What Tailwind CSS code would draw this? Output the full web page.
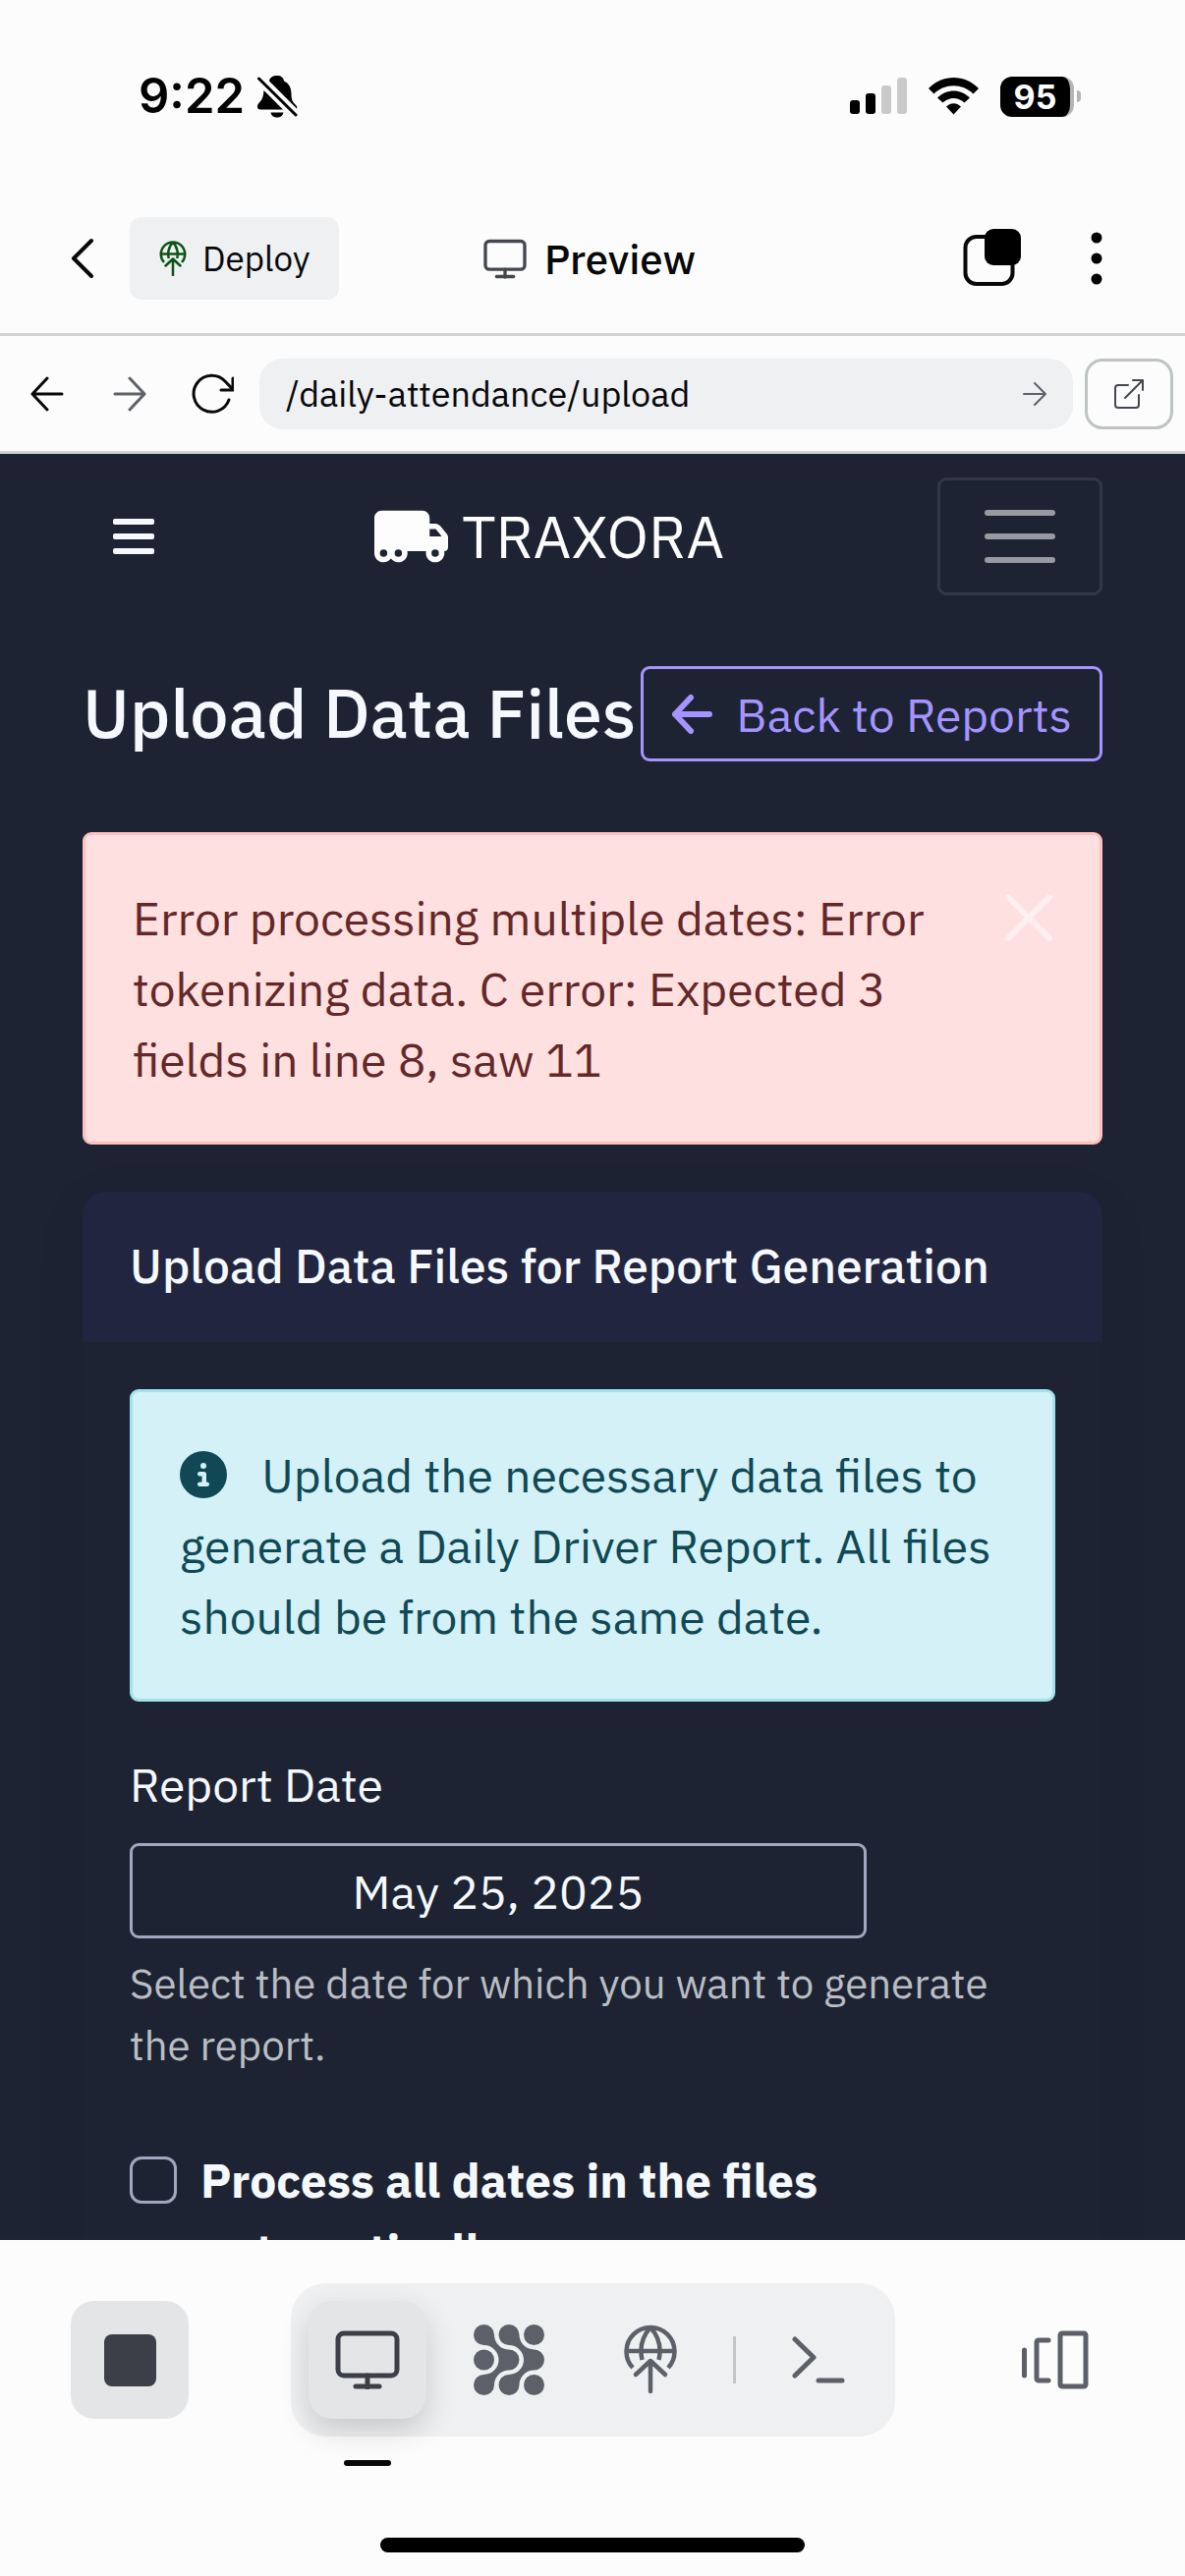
<!DOCTYPE html>
<html lang="en">
<head>
<meta charset="utf-8">
<meta name="viewport" content="width=device-width, initial-scale=1">
<title>Preview</title>
<script src="https://cdn.jsdelivr.net/npm/@tailwindcss/browser@4"></script>
</head>
<body class="flex h-screen flex-col bg-[#fcfcfc] font-['IBM_Plex_Sans',Roboto,sans-serif] text-[#07080a]">

<!-- Status bar -->
<div class="h-[187px] shrink-0 pt-[66px]">
  <div class="flex h-16 items-center justify-between pr-[106px] pl-[141px] font-[Inter,sans-serif] text-black">
    <div class="flex items-center gap-3">
      <span class="text-[49px] font-semibold">9:22</span>
      <svg class="h-[44px] w-[42px]" viewBox="0 0 42 44" fill="none">
        <path fill="#000" d="M21 1c4 0 6.500 2 7 5.500 5 2 7.500 7 7.500 13 0 6 1 8 5 12 .8.800 1 2 .5 3L13 6.500c.4-3.500 3.500-5.500 8-5.500zM7.500 16 27 35.500H4c-3 0-4-3.500-2-6 4-4 5-7 5.500-13.500zM14.500 38.500h13c-.5 3-3 5-6.500 5s-6-2-6.500-5z"/>
        <path stroke="#fcfcfc" stroke-width="7" d="M3 4 40 41"/>
        <path stroke="#000" stroke-width="3" stroke-linecap="round" d="M2.500 4 40 41"/>
      </svg>
    </div>
    <div class="flex items-center">
      <svg class="h-[38px] w-[58px]" viewBox="0 0 58 38">
        <rect x="0" y="23" width="10" height="14" rx="3"/><rect x="16" y="16" width="10" height="21" rx="3"/>
        <rect x="32" y="8" width="10" height="29" rx="3" fill="#c9c9c9"/><rect x="48" y="0" width="10" height="37" rx="3" fill="#c9c9c9"/>
      </svg>
      <svg class="ml-[22px] h-[38px] w-[51px]" viewBox="0 0 51 38">
        <path d="M0 11C14-3.600 37-3.600 51 11l-5.500 5.500c-11-11-29-11-40 0zM9 20.500c9.500-9.500 23.500-9.500 33 0l-5.500 5c-6.500-6-15.500-6-22 0zM18 29.500c4.500-4.500 10.500-4.500 15 0L25.500 37.500z"/>
      </svg>
      <div class="ml-[22px] flex items-center gap-[3px]">
        <span class="flex h-[41px] w-[75px] items-center justify-center rounded-[12px] border-r-4 border-[#b4b4b4] bg-black text-[34px] font-bold text-white">95</span>
        <span class="h-3 w-1 rounded-r-full bg-[#b4b4b4]"></span>
      </div>
    </div>
  </div>
</div>

<!-- App toolbar -->
<header class="grid shrink-0 grid-cols-[1fr_auto_1fr] items-center border-b-[3px] border-[#d2d3d3] py-[34px] pr-[66px] pl-[60px]">
  <div class="flex items-center gap-6">
    <button type="button" aria-label="Back" class="flex h-[84px] w-12 items-center justify-center">
      <svg class="h-[42px] w-6" viewBox="0 0 24 42" fill="none" stroke="currentColor" stroke-width="4" stroke-linecap="round" stroke-linejoin="round"><path d="M21 3 3 21l18 18"/></svg>
    </button>
    <button type="button" class="flex h-[84px] items-center gap-4 rounded-[12px] bg-[#eff0f2] px-[30px] text-[35px]">
      <svg class="h-[36px] w-[28px] text-[#0b5416]" viewBox="0 0 54 72" fill="none" stroke="currentColor" stroke-width="5" stroke-linecap="round" stroke-linejoin="round"><path stroke-linecap="butt" d="M9 44a24.500 24.500 0 1 1 36 0M2.500 27h49M27 3C17 14 16 25 18.500 36M27 3c10 11 11 22 8.500 33"/><path d="M27 70V37M12 51l15-14 15 14"/></svg>
      Deploy
    </button>
  </div>
  <h1 class="flex items-center gap-[18px] text-[42px] font-medium">
    <svg class="h-[41px] w-[44px] text-[#44474f]" viewBox="0 0 66 60" fill="none" stroke="currentColor" stroke-width="5" stroke-linecap="round"><rect x="3" y="3" width="60" height="43" rx="6"/><path d="M33 46v12M20 57h26"/></svg>
    Preview
  </h1>
  <div class="flex items-center justify-end gap-[52px]">
    <button type="button" aria-label="Duplicate">
      <svg class="h-[60px] w-[60px]" viewBox="0 0 60 60"><rect x="2.500" y="8" width="48" height="48" rx="11" fill="none" stroke="currentColor" stroke-width="4"/><rect x="22" y="0" width="37" height="37" rx="9"/></svg>
    </button>
    <button type="button" aria-label="More" class="flex w-12 justify-center">
      <svg class="h-[54px] w-3" viewBox="0 0 12 54"><circle cx="6" cy="6" r="5.500"/><circle cx="6" cy="27" r="5.500"/><circle cx="6" cy="48" r="5.500"/></svg>
    </button>
  </div>
</header>

<!-- Address bar -->
<nav class="flex shrink-0 items-center gap-3 border-b-[3px] border-[#d0d4d2] px-3 pt-[23px] pb-[22px]">
  <button type="button" aria-label="Go back" class="flex h-[72px] w-[72px] items-center justify-center">
    <svg class="h-9 w-9" viewBox="0 0 36 36" fill="none" stroke="currentColor" stroke-width="3" stroke-linecap="round" stroke-linejoin="round"><path d="M33 18H4M18 2 3 18l15 16"/></svg>
  </button>
  <button type="button" aria-label="Go forward" class="flex h-[72px] w-[72px] items-center justify-center text-[#5f6168]">
    <svg class="h-9 w-9" viewBox="0 0 36 36" fill="none" stroke="currentColor" stroke-width="3" stroke-linecap="round" stroke-linejoin="round"><path d="M3 18h29M18 2l15 16-15 16"/></svg>
  </button>
  <button type="button" aria-label="Reload" class="flex h-[72px] w-[72px] items-center justify-center">
    <svg class="h-11 w-11" viewBox="0 0 44 44" fill="none" stroke="currentColor" stroke-width="3" stroke-linecap="round" stroke-linejoin="round"><path d="M39 28A18.500 18.500 0 1 1 35 9l8 8.500M43 6v12H31"/></svg>
  </button>
  <div class="flex h-[72px] min-w-0 flex-1 items-center rounded-[24px] bg-[#eff0f2] pr-6 pl-[27px]">
    <input type="text" aria-label="Path" value="/daily-attendance/upload" class="min-w-0 flex-1 bg-transparent text-[36px] outline-none">
    <button type="button" aria-label="Go" class="text-[#5f6168]">
      <svg class="h-[30px] w-[30px]" viewBox="0 0 30 30" fill="none" stroke="currentColor" stroke-width="2" stroke-linecap="round" stroke-linejoin="round"><path d="M4 15h22M15 4l11 11-11 11"/></svg>
    </button>
  </div>
  <button type="button" aria-label="Open in new tab" class="flex h-[72px] w-[90px] items-center justify-center rounded-[18px] border-[3px] border-[#bfc3c3] text-[#44474f]">
    <svg class="h-8 w-8" viewBox="0 0 32 32" fill="none" stroke="currentColor" stroke-width="2" stroke-linecap="round" stroke-linejoin="round"><path d="M15 7H5a3 3 0 0 0-3 3v17a3 3 0 0 0 3 3h18a3 3 0 0 0 3-3V17M12 20 30 2M20 2h10v10"/></svg>
  </button>
</nav>

<!-- Previewed page -->
<main class="min-h-0 flex-1 overflow-hidden bg-[#1d2332] text-[#f5f8fc]">
  <nav class="flex h-[168px] items-center justify-between px-[84px]">
    <button type="button" aria-label="Toggle sidebar" class="flex h-[96px] w-[104px] items-center justify-center">
      <svg class="h-9 w-[42px]" viewBox="0 0 42 36" fill="currentColor"><rect width="42" height="6" rx="2"/><rect y="15" width="42" height="6" rx="2"/><rect y="30" width="42" height="6" rx="2"/></svg>
    </button>
    <a href="#" class="mr-6 flex items-center gap-[14px] text-[60px] leading-none text-[#fdfdfd]">
      <svg class="h-[60px] w-[75px]" viewBox="0 0 640 512" fill="currentColor"><path d="M64 32C28.700 32 0 60.700 0 96V400c0 44.200 35.800 80 80 80c26.200 0 49.400-12.600 64-32c14.600 19.400 37.800 32 64 32c44.200 0 80-35.800 80-80c0-5.500-.6-10.800-1.600-16H449.600c-1 5.200-1.600 10.500-1.600 16c0 44.200 35.800 80 80 80s80-35.800 80-80c0-5.500-.6-10.800-1.600-16H608c17.700 0 32-14.300 32-32V261.700c0-9.200-3.200-18.200-9-25.300l-58.800-71.800c-10.600-13-26.500-20.500-43.300-20.500H480V96c0-35.300-28.700-64-64-64H64zM585 256H480V192h48.800c2.400 0 4.700 1.100 6.200 2.900L585 256zM528 368a32 32 0 1 1 0 64 32 32 0 1 1 0-64zM176 400a32 32 0 1 1 64 0 32 32 0 1 1-64 0zM80 368a32 32 0 1 1 0 64 32 32 0 1 1 0-64z"/></svg>
      TRAXORA
    </a>
    <button type="button" aria-label="Toggle navigation" class="flex h-[120px] w-[168px] items-center justify-center rounded-[9px] border-[3px] border-[#313747]">
      <svg class="h-[54px] w-[72px] text-[#989aa1]" viewBox="0 0 72 54" fill="currentColor"><rect width="72" height="6" rx="3"/><rect y="24" width="72" height="6" rx="3"/><rect y="48" width="72" height="6" rx="3"/></svg>
    </button>
  </nav>

  <div class="px-[84px] pt-12">
    <div class="flex items-start justify-between">
      <h2 class="text-[70px] leading-[94px] font-medium whitespace-nowrap">Upload Data Files</h2>
      <a href="#" class="flex h-[97px] items-center gap-6 rounded-[9px] border-[3px] border-[#a594ff] px-7 text-[48px] leading-[72px] whitespace-nowrap text-[#a594ff]">
        <svg class="h-[42px] w-[42px]" viewBox="0 0 42 42" fill="none" stroke="currentColor" stroke-width="6" stroke-linecap="round" stroke-linejoin="round"><path d="M39 21H4M20 4 4 21l16 17"/></svg>
        Back to Reports
      </a>
    </div>

    <div role="alert" class="mt-[72px] flex items-start justify-between rounded-[9px] border-[3px] border-[#ffc0be] bg-[#ffe0e0] p-12 text-[#642828]">
      <p class="max-w-[840px] text-[48px] leading-[72px]">Error processing multiple dates: Error tokenizing data. C error: Expected 3 fields in line 8, saw 11</p>
      <button type="button" aria-label="Close" class="mt-3 text-white/50">
        <svg class="h-12 w-12" viewBox="0 0 48 48" fill="none" stroke="currentColor" stroke-width="6" stroke-linecap="round"><path d="M3 3l42 42M45 3 3 45"/></svg>
      </button>
    </div>

    <section class="mt-12 rounded-[24px] shadow-[0_12px_60px_rgba(0,0,0,0.05)]">
      <div class="h-[153px] rounded-t-[24px] bg-[#212540] px-12 pt-[46px]">
        <h3 class="text-[48px] leading-[58px] font-medium">Upload Data Files for Report Generation</h3>
      </div>
      <form class="p-12">
        <div class="rounded-[9px] border-[3px] border-[#a3e2ec] bg-[#d3f1f7] p-12 text-[48px] leading-[72px] text-[#104955]">
          <svg class="mr-6 inline h-12 w-12 -translate-y-1.5" viewBox="0 0 512 512" fill="currentColor"><path d="M256 512A256 256 0 1 0 256 0a256 256 0 1 0 0 512zM216 336h24V272H216c-13.300 0-24-10.700-24-24s10.700-24 24-24h48c13.300 0 24 10.700 24 24v88h8c13.300 0 24 10.700 24 24s-10.700 24-24 24H216c-13.300 0-24-10.700-24-24s10.700-24 24-24zm40-208a32 32 0 1 1 0 64 32 32 0 1 1 0-64z"/></svg>
          Upload the necessary data files to generate a Daily Driver Report. All files should be from the same date.
        </div>
        <label for="report-date" class="mt-12 block text-[48px] leading-[72px]">Report Date</label>
        <input id="report-date" type="text" value="May 25, 2025" class="mt-6 block h-[97px] w-[750px] max-w-full rounded-[9px] border-[3px] border-[#a0a8bf] bg-transparent text-center text-[48px] outline-none">
        <p class="mt-[14px] text-[42px] leading-[63px] text-[#b9bdc4]">Select the date for which you want to generate the report.</p>
        <div class="mt-[70px] flex items-start gap-6">
          <input id="all-dates" type="checkbox" class="mt-3 h-12 w-12 shrink-0 appearance-none rounded-[12px] border-[3px] border-[#a0a8bf]">
          <label for="all-dates" class="max-w-[700px] text-[48px] leading-[72px] font-bold">Process all dates in the files automatically</label>
        </div>
      </form>
    </section>
  </div>
</main>

<!-- Bottom tool switcher -->
<footer class="relative z-10 flex shrink-0 flex-col bg-[#fcfcfc] pt-11 pb-6">
  <div class="flex items-center justify-between px-[72px]">
    <button type="button" aria-label="Stop" class="flex h-[120px] w-[120px] items-center justify-center rounded-[24px] bg-[#e4e5e7]">
      <span class="h-[53px] w-[53px] rounded-[8px] bg-[#3c3f47]"></span>
    </button>
    <div class="flex items-center gap-6 rounded-[36px] bg-[#eff0f2] p-[18px] text-[#5d6068]">
      <button type="button" aria-label="Preview" class="relative flex h-[120px] w-[120px] items-center justify-center rounded-[24px] bg-[#e4e5e7] text-[#3c3f47] shadow-[0_12px_30px_rgba(0,0,0,0.16)]">
        <svg class="h-[60px] w-[66px]" viewBox="0 0 66 60" fill="none" stroke="currentColor" stroke-width="5" stroke-linecap="round"><rect x="3" y="3" width="60" height="43" rx="6"/><path d="M33 46v12M21 57h24"/></svg>
        <span class="absolute top-[162px] h-1.5 w-12 rounded-full bg-[#07080a]"></span>
      </button>
      <button type="button" aria-label="Agent" class="flex h-[120px] w-[120px] items-center justify-center">
        <svg class="h-[72px] w-[72px]" viewBox="0 0 72 72" fill="currentColor">
          <path d="M0 10.500A10.500 10.500 0 0 1 21 10.500A15 15 0 0 0 36 25.500A10.500 10.500 0 0 1 36 46.500A15 15 0 0 0 21 61.500A10.500 10.500 0 1 1 10.500 51A15 15 0 0 0 10.500 21A10.500 10.500 0 0 1 0 10.500Z"/>
          <path transform="translate(25.500 0)" d="M0 10.500A10.500 10.500 0 0 1 21 10.500A15 15 0 0 0 36 25.500A10.500 10.500 0 0 1 36 46.500A15 15 0 0 0 21 61.500A10.500 10.500 0 1 1 10.500 51A15 15 0 0 0 10.500 21A10.500 10.500 0 0 1 0 10.500Z"/>
          <circle cx="10.500" cy="36" r="10.500"/><circle cx="61.500" cy="10.500" r="10.500"/><circle cx="61.500" cy="61.500" r="10.500"/>
        </svg>
      </button>
      <button type="button" aria-label="Deployments" class="flex h-[120px] w-[120px] items-center justify-center">
        <svg class="h-[72px] w-[54px]" viewBox="0 0 54 72" fill="none" stroke="currentColor" stroke-width="4.500" stroke-linecap="round" stroke-linejoin="round"><path stroke-linecap="butt" d="M9 44a24.500 24.500 0 1 1 36 0M2.500 27h49M27 3C17 14 16 25 18.500 36M27 3c10 11 11 22 8.500 33"/><path d="M27 68V37M12 51l15-14 15 14"/></svg>
      </button>
      <span class="h-12 w-[3px] bg-[#c2c4c6]"></span>
      <button type="button" aria-label="Console" class="flex h-[120px] w-[120px] items-center justify-center">
        <svg class="h-12 w-[54px]" viewBox="0 0 54 48" fill="none" stroke="currentColor" stroke-width="5" stroke-linecap="round" stroke-linejoin="round"><path d="M3 3l19 18.500L3 40M27 45h24"/></svg>
      </button>
    </div>
    <button type="button" aria-label="All tabs" class="flex h-[120px] w-[120px] items-center justify-center text-[#5d6068]">
      <svg class="h-[60px] w-[70px]" viewBox="0 0 70 60" fill="none" stroke="currentColor" stroke-width="5" stroke-linecap="round" stroke-linejoin="round"><path d="M3.500 20v26M28 10H18a2 2 0 0 0-2 2v37a2 2 0 0 0 2 2h10"/><rect x="40" y="3" width="26" height="54" rx="2"/></svg>
    </button>
  </div>
  <div class="mx-auto mt-[103px] h-[15px] w-[432px] rounded-full bg-black"></div>
</footer>
</body>
</html>
